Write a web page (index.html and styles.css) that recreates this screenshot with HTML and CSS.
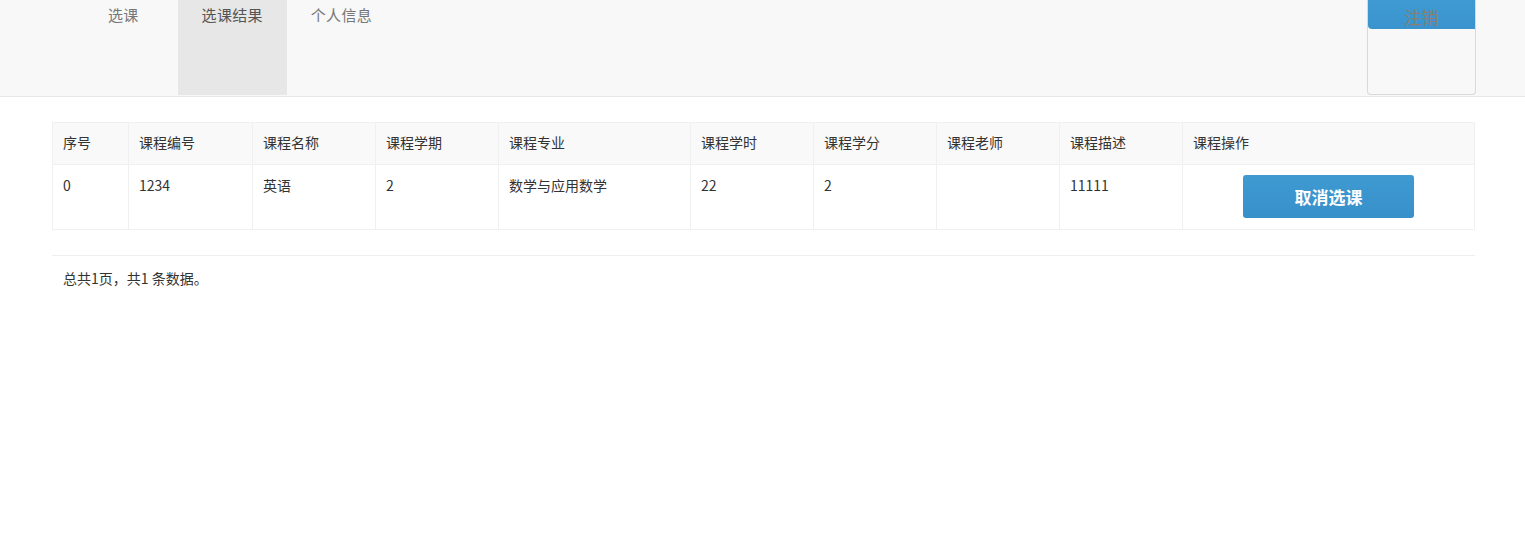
FILE: index.html
```html
<!DOCTYPE html>
<html lang="zh-CN">

<head>
  <meta charset="UTF-8">
  <meta name="viewport" content="width=device-width, initial-scale=1.0">
  <title>选课结果</title>
  <link rel="stylesheet" href="styles.css">
</head>

<body>
  <div class="navbar">
    <ul class="nav">
      <li class="nav-first"><a href="#">选课</a></li>
      <li class="active"><a href="#">选课结果</a></li>
      <li><a href="#">个人信息</a></li>
    </ul>
    <div class="logout-box">
      <button class="logout">注销</button>
    </div>
  </div>

  <div class="content">
    <table class="course-table">
      <colgroup>
        <col style="width: 76px">
        <col style="width: 124px">
        <col style="width: 123px">
        <col style="width: 123px">
        <col style="width: 192px">
        <col style="width: 123px">
        <col style="width: 123px">
        <col style="width: 123px">
        <col style="width: 123px">
        <col>
      </colgroup>
      <thead>
        <tr>
          <th>序号</th>
          <th>课程编号</th>
          <th>课程名称</th>
          <th>课程学期</th>
          <th>课程专业</th>
          <th>课程学时</th>
          <th>课程学分</th>
          <th>课程老师</th>
          <th>课程描述</th>
          <th>课程操作</th>
        </tr>
      </thead>
      <tbody>
        <tr>
          <td>0</td>
          <td>1234</td>
          <td>英语</td>
          <td>2</td>
          <td>数学与应用数学</td>
          <td>22</td>
          <td>2</td>
          <td></td>
          <td>11111</td>
          <td class="op"><button class="btn-cancel">取消选课</button></td>
        </tr>
      </tbody>
    </table>

    <div class="pager">总共1页，共1 条数据。</div>
  </div>
</body>

</html>
```

FILE: styles.css
```css
/* styles.css */
body {
  font-family: "Noto Sans CJK SC", "Open Sans", sans-serif;
  font-size: 14px;
  color: #333;
  background: #fff;
  margin: 0;
}

.navbar {
  display: flex;
  justify-content: space-between;
  height: 96px;
  background-color: #f8f8f8;
  border-bottom: 1px solid #e7e7e7;
}

.nav {
  display: flex;
  list-style: none;
  margin: 0 0 0 84px;
  padding: 0;
}

.nav li a {
  display: block;
  height: 95px;
  padding: 3px 24px 0;
  box-sizing: border-box;
  font-size: 15px;
  line-height: 24px;
  letter-spacing: 0.3px;
  color: #777;
  text-decoration: none;
}

.nav .nav-first {
  margin-right: 15px;
}

.nav .active a {
  background-color: #e7e7e7;
  color: #555;
}

.logout-box {
  width: 109px;
  height: 95px;
  margin-right: 49px;
  box-sizing: border-box;
  border: 1px solid #d9d9d9;
  border-top: none;
  border-radius: 0 0 4px 4px;
}

.logout {
  display: block;
  width: 100%;
  height: 29px;
  padding: 4px 0 0;
  border: none;
  border-radius: 0 0 0 4px;
  background: linear-gradient(#3f9ad2, #3a93cd);
  font-family: inherit;
  font-size: 17px;
  line-height: 20px;
  color: #8a7f70;
}

.content {
  padding: 25px 50px 0 52px;
}

.course-table {
  width: 1423px;
  table-layout: fixed;
  border-collapse: collapse;
  border: 1px solid #f0f0f0;
}

.course-table th,
.course-table td {
  padding: 10px 10px 11px;
  line-height: 20px;
  text-align: left;
  vertical-align: top;
  font-weight: normal;
  border: 1px solid #f0f0f0;
}

.course-table th {
  padding-top: 9px;
  padding-bottom: 12px;
}

.course-table thead tr {
  background-color: #f9f9f9;
}

.course-table td.op {
  text-align: center;
}

.btn-cancel {
  width: 171px;
  height: 43px;
  border: none;
  border-radius: 3px;
  background: linear-gradient(#3f9ad2, #3890c9);
  color: #fff;
  font-family: inherit;
  font-size: 17px;
  font-weight: bold;
  cursor: pointer;
}

.pager {
  margin-top: 25px;
  padding: 12px 11px;
  border-top: 1px solid #eee;
  line-height: 20px;
}
```
